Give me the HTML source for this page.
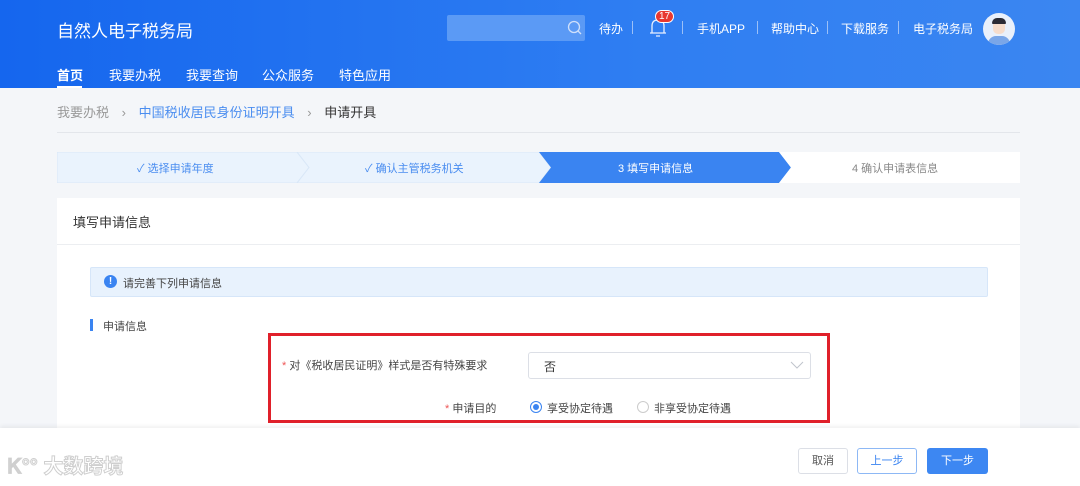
<!DOCTYPE html>
<html><head><meta charset="utf-8"><style>
*{margin:0;padding:0;box-sizing:border-box}
body{width:1080px;height:486px;overflow:hidden;background:#f4f6f9;font-family:"Liberation Sans","Noto Sans CJK SC",sans-serif;position:relative;color:#333}
.hdr{position:absolute;left:0;top:0;width:1080px;height:88px;background:linear-gradient(90deg,#1566ee,#2f7ef2 60%,#3b86f1)}
.abs{position:absolute;white-space:nowrap}
.w{color:#fff}
.sep{position:absolute;top:21px;width:1px;height:13px;background:#9cc0f7}
</style></head><body>
<div class="hdr"></div>
<div class="abs w" style="left:57px;top:17px;font-size:17px">自然人电子税务局</div>
<div class="abs" style="left:447px;top:15px;width:138px;height:26px;background:#5b9af5;border-radius:2px"></div>
<svg class="abs" style="left:567px;top:20px" width="15" height="15"><circle cx="7" cy="7" r="5.5" fill="none" stroke="#cfe0fb" stroke-width="1.3"/><line x1="11" y1="11" x2="14" y2="14" stroke="#cfe0fb" stroke-width="1.3"/></svg>
<div class="abs w" style="left:599px;top:20px;font-size:12px">待办</div>
<div class="sep" style="left:632px"></div>
<svg class="abs" style="left:648px;top:16px" width="20" height="22"><path d="M4 17 L4 10 Q4 4 10 4 Q16 4 16 10 L16 17 Z M2 17 H18 M8 20 H12" fill="none" stroke="#e6efff" stroke-width="1.3"/></svg>
<div class="abs" style="left:655px;top:10px;width:19px;height:13px;background:#e8382f;border-radius:7px;border:1px solid #fff;color:#fff;font-size:10px;line-height:11px;text-align:center">17</div>
<div class="sep" style="left:682px"></div>
<div class="abs w" style="left:697px;top:20px;font-size:12px">手机APP</div>
<div class="sep" style="left:757px"></div>
<div class="abs w" style="left:771px;top:20px;font-size:12px">帮助中心</div>
<div class="sep" style="left:827px"></div>
<div class="abs w" style="left:841px;top:20px;font-size:12px">下载服务</div>
<div class="sep" style="left:898px"></div>
<div class="abs w" style="left:913px;top:20px;font-size:12px">电子税务局</div>
<div class="abs" style="left:983px;top:13px;width:32px;height:32px;border-radius:50%;background:#e9f0fb;overflow:hidden">
<div style="position:absolute;left:10px;top:7px;width:12px;height:14px;border-radius:5px;background:#f6dccb"></div>
<div style="position:absolute;left:9px;top:5px;width:14px;height:6px;border-radius:5px 5px 1px 1px;background:#2b2b35"></div>
<div style="position:absolute;left:5px;top:23px;width:22px;height:12px;border-radius:8px 8px 0 0;background:#7aa6e8"></div></div>
<div class="abs w" style="left:57px;top:65px;font-size:13px;font-weight:bold">首页</div>
<div class="abs" style="left:57px;top:86px;width:25px;height:2px;background:#fff"></div>
<div class="abs w" style="left:109px;top:65px;font-size:13px">我要办税</div>
<div class="abs w" style="left:186px;top:65px;font-size:13px">我要查询</div>
<div class="abs w" style="left:262px;top:65px;font-size:13px">公众服务</div>
<div class="abs w" style="left:339px;top:65px;font-size:13px">特色应用</div>
<div class="abs" style="left:57px;top:102px;font-size:13px;color:#999">我要办税 <span style="margin:0 9px;color:#999">›</span> <span style="color:#4a8df0">中国税收居民身份证明开具</span> <span style="margin:0 9px;color:#999">›</span> <span style="color:#333">申请开具</span></div>
<div class="abs" style="left:57px;top:132px;width:963px;height:1px;background:#e3e6eb"></div>
<svg class="abs" style="left:57px;top:152px" width="963" height="31">
<polygon points="0,0 240,0 252,15.5 240,31 0,31" fill="#eaf3fd" stroke="#d9e7f7"/>
<polygon points="240,0 482,0 494,15.5 482,31 240,31 252,15.5" fill="#eaf3fd" stroke="#d9e7f7"/>
<polygon points="482,0 722,0 734,15.5 722,31 482,31 494,15.5" fill="#3a84f1"/>
<polygon points="722,0 963,0 963,31 722,31 734,15.5" fill="#fff"/>
<text x="80" y="20" font-size="11" fill="#4a8df0" font-family="Liberation Sans,Noto Sans CJK SC,sans-serif">✓ 选择申请年度</text>
<text x="308" y="20" font-size="11" fill="#4a8df0" font-family="Liberation Sans,Noto Sans CJK SC,sans-serif">✓ 确认主管税务机关</text>
<text x="561" y="20" font-size="11" fill="#fff" font-family="Liberation Sans,Noto Sans CJK SC,sans-serif">3  填写申请信息</text>
<text x="795" y="20" font-size="11" fill="#888" font-family="Liberation Sans,Noto Sans CJK SC,sans-serif">4  确认申请表信息</text>
</svg>
<div class="abs" style="left:57px;top:198px;width:963px;height:240px;background:#fff"></div>
<div class="abs" style="left:73px;top:212px;font-size:13px;color:#333">填写申请信息</div>
<div class="abs" style="left:57px;top:244px;width:963px;height:1px;background:#eceef1"></div>
<div class="abs" style="left:90px;top:267px;width:898px;height:30px;background:#e8f2fd;border:1px solid #d6e6f9;border-radius:2px"></div>
<div class="abs" style="left:104px;top:275px;width:13px;height:13px;border-radius:50%;background:#3a84f1;color:#fff;font-size:10px;line-height:13px;text-align:center;font-weight:bold">!</div>
<div class="abs" style="left:123px;top:275px;font-size:11px;color:#444">请完善下列申请信息</div>
<div class="abs" style="left:90px;top:319px;width:3px;height:12px;background:#3a84f1"></div>
<div class="abs" style="left:103px;top:318px;font-size:11px;color:#444">申请信息</div>
<div class="abs" style="left:282px;top:357px;font-size:11px;color:#444"><span style="color:#e55">*</span> 对《税收居民证明》样式是否有特殊要求</div>
<div class="abs" style="left:528px;top:352px;width:283px;height:27px;border:1px solid #dcdfe6;border-radius:3px;background:#fff"></div>
<div class="abs" style="left:544px;top:358px;font-size:12px;color:#333">否</div>
<svg class="abs" style="left:790px;top:360px" width="14" height="10"><path d="M1 2 L7 8 L13 2" fill="none" stroke="#c0c4cc" stroke-width="1"/></svg>
<div class="abs" style="left:445px;top:400px;font-size:11px;color:#444"><span style="color:#e55">*</span> 申请目的</div>
<div class="abs" style="left:530px;top:401px;width:12px;height:12px;border-radius:50%;border:1px solid #3a84f1;background:#fff"><div style="margin:2px;width:6px;height:6px;border-radius:50%;background:#3a84f1"></div></div>
<div class="abs" style="left:547px;top:400px;font-size:11px;color:#444">享受协定待遇</div>
<div class="abs" style="left:637px;top:401px;width:12px;height:12px;border-radius:50%;border:1px solid #ccc;background:#fff"></div>
<div class="abs" style="left:654px;top:400px;font-size:11px;color:#444">非享受协定待遇</div>
<div class="abs" style="left:268px;top:333px;width:562px;height:90px;border:3px solid #e0202a"></div>
<div class="abs" style="left:0;top:428px;width:1080px;height:58px;background:#fff;box-shadow:0 -2px 4px rgba(0,0,0,0.06)"></div>
<div class="abs" style="left:8px;top:450px;font-size:20px;color:#fff;font-weight:bold;-webkit-text-stroke:1px #cfcfcf">Ꮶ°° 大数跨境</div>
<div class="abs" style="left:798px;top:448px;width:50px;height:26px;border:1px solid #dcdfe6;border-radius:3px;font-size:11px;line-height:24px;text-align:center;color:#555">取消</div>
<div class="abs" style="left:857px;top:448px;width:60px;height:26px;border:1px solid #8db8f5;border-radius:3px;font-size:11px;line-height:24px;text-align:center;color:#3a84f1">上一步</div>
<div class="abs" style="left:927px;top:448px;width:61px;height:26px;background:#3d87f2;border-radius:3px;font-size:11px;line-height:26px;text-align:center;color:#fff">下一步</div>
</body></html>
